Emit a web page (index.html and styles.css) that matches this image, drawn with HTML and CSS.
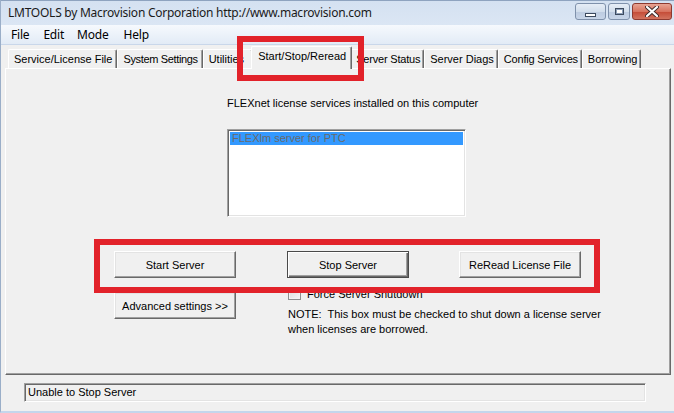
FILE: index.html
```html
<!DOCTYPE html>
<html>
<head>
<meta charset="utf-8">
<link rel="stylesheet" href="styles.css">
</head>
<body>
<div class="window">
  <div class="titlebar">
    <span class="title">LMTOOLS by Macrovision Corporation http://www.macrovision.com</span>
    <div class="controls">
      <div class="ctl ctl-min"><span class="min-glyph"></span></div>
      <div class="ctl ctl-max"><span class="max-glyph"></span></div>
      <div class="ctl ctl-close">
        <svg width="14" height="11" viewBox="0 0 14 11">
          <path d="M2 1 L12 10 M12 1 L2 10" stroke="#3c2a2a" stroke-width="4" stroke-linecap="round"/>
          <path d="M2 1 L12 10 M12 1 L2 10" stroke="#ffffff" stroke-width="2.2" stroke-linecap="round"/>
        </svg>
      </div>
    </div>
  </div>
  <div class="menubar">
    <span class="menu-item">File</span>
    <span class="menu-item">Edit</span>
    <span class="menu-item">Mode</span>
    <span class="menu-item">Help</span>
  </div>
  <div class="tabs">
    <div class="tab">Service/License File</div>
    <div class="tab tab-tight">System Settings</div>
    <div class="tab tab-wide">Utilities</div>
    <div class="tab tab-active">Start/Stop/Reread</div>
    <div class="tab tab-after tab-snug">Server Status</div>
    <div class="tab tab-after">Server Diags</div>
    <div class="tab tab-after tab-snug">Config Services</div>
    <div class="tab tab-after">Borrowing</div>
  </div>
  <div class="panel">
    <div class="services">
      <div class="label">FLEXnet license services installed on this computer</div>
      <div class="listbox">
        <div class="list-item selected">FLEXlm server for PTC</div>
      </div>
    </div>
    <div class="btn-row">
      <div class="btn">Start Server</div>
      <div class="btn btn-default">Stop Server</div>
      <div class="btn">ReRead License File</div>
    </div>
    <div class="lower">
      <div class="btn btn-adv">Advanced settings &gt;&gt;</div>
      <div class="options">
        <div class="check-row"><span class="checkbox"></span><span>Force Server Shutdown</span></div>
        <div class="note">NOTE:&nbsp; This box must be checked to shut down a license server<br>when licenses are borrowed.</div>
      </div>
    </div>
  </div>
  <div class="statusbar">
    <div class="status">Unable to Stop Server</div>
  </div>
</div>
<div class="hl hl-tab"></div>
<div class="hl hl-buttons"></div>
</body>
</html>
```
FILE: styles.css
```css
html, body {
  margin: 0;
  padding: 0;
}
body {
  width: 674px;
  height: 413px;
  overflow: hidden;
  background: #f0f0f0;
  font-family: "Liberation Sans", Arial, sans-serif;
  font-size: 11px;
  color: #000;
  position: relative;
}
.window {
  height: 411px;
  border-bottom: 2px solid #c4d6ec;
  border-left: 1px solid #9aaec8;
  box-sizing: content-box;
  display: flex;
  flex-direction: column;
}
.titlebar {
  height: 25px;
  display: flex;
  align-items: center;
  background: linear-gradient(#d4e1f1, #dbe6f4);
  border-top: 1px solid #8ea3bf;
  box-sizing: border-box;
  padding-left: 7px;
}
.title {
  font-family: "Noto Sans", "Open Sans", sans-serif;
  font-size: 12px;
  color: #1a1a1a;
  letter-spacing: -0.25px;
  flex: 1;
  margin-top: -1px;
}
.controls {
  display: flex;
  gap: 2px;
  margin-right: 2px;
  margin-top: -3px;
}
.ctl {
  height: 17px;
  box-sizing: border-box;
  border: 1px solid #7f91ab;
  border-radius: 3px;
  display: flex;
  align-items: center;
  justify-content: center;
}
.ctl-min, .ctl-max {
  background: linear-gradient(#e6edf6 0%, #d2deec 50%, #bccbe0 51%, #c7d5e8 100%);
}
.ctl-min { width: 31px; }
.ctl-max { width: 22px; }
.ctl-close {
  width: 40px;
  background: linear-gradient(#e8a493 0%, #d7735f 50%, #c44a35 51%, #d2735f 100%);
  border-color: #8d3a30;
}
.min-glyph {
  width: 9px;
  height: 2px;
  border: 1px solid #3c4a5e;
  background: #fff;
  margin-top: 6px;
}
.max-glyph {
  width: 7px;
  height: 5px;
  border: 1px solid #3c4a5e;
  background: #fff;
  box-shadow: inset 0 0 0 1px #8fa0b8;
}
.menubar {
  height: 19px;
  display: flex;
  align-items: center;
  padding-left: 10px;
  gap: 12px;
  background: linear-gradient(#f6f9fd, #e2ebf6);
  border-bottom: 1px solid #c9d7ea;
  font-family: "Noto Sans", "Open Sans", sans-serif;
  font-size: 12px;
  letter-spacing: -0.2px;
}
.menu-item:nth-child(2) { margin-left: 2px; }
.menu-item:nth-child(3) { margin-left: 1px; }
.menu-item:nth-child(4) { margin-left: 3px; }
.tabs {
  height: 23px;
  display: flex;
  align-items: flex-end;
  padding-left: 7px;
  box-sizing: border-box;
}
.tab {
  height: 19px;
  box-sizing: border-box;
  padding: 0 4px 0 5px;
  line-height: 18px;
  white-space: nowrap;
  border-top: 1px solid #ffffff;
  border-left: 1px solid #ffffff;
  border-right: 1px solid #696969;
  box-shadow: inset -1px 0 #a0a0a0;
  border-radius: 2px 2px 0 0;
}
.tab-tight {
  letter-spacing: -0.35px;
}
.tab-wide {
  padding-right: 8px;
}
.tab-after {
  padding-right: 3px;
}
.tab-snug {
  letter-spacing: -0.2px;
}
.tab-active {
  height: 23px;
  margin: 0 -2px -1px -2px;
  padding: 0 5px 0 6px;
  line-height: 19px;
  background: #f0f0f0;
  position: relative;
  z-index: 1;
}
.panel {
  height: 307px;
  margin: 0 3px 0 4px;
  box-sizing: border-box;
  border-top: 1px solid #ffffff;
  border-left: 1px solid #ffffff;
  border-right: 1px solid #696969;
  border-bottom: 1px solid #696969;
  box-shadow: inset -1px -1px #a0a0a0;
  padding-top: 27px;
}
.services {
  margin-left: 221px;
}
.label {
  line-height: 14px;
}
.listbox {
  margin-top: 19px;
  width: 239px;
  height: 88px;
  box-sizing: border-box;
  background: #fff;
  border-top: 1px solid #a0a0a0;
  border-left: 1px solid #a0a0a0;
  border-right: 1px solid #ffffff;
  border-bottom: 1px solid #ffffff;
  box-shadow: inset 1px 1px #696969, inset -1px -1px #e3e3e3;
  padding: 2px 2px 0 2px;
}
.list-item {
  height: 13px;
  line-height: 13px;
  padding-left: 2px;
}
.selected {
  background: #3399ff;
  color: #6a6a6a;
}
.btn-row {
  display: flex;
  margin-left: 108px;
  margin-top: 34px;
  gap: 51px;
}
.btn {
  width: 122px;
  height: 27px;
  box-sizing: border-box;
  display: flex;
  align-items: center;
  justify-content: center;
  border-top: 1px solid #ffffff;
  border-left: 1px solid #ffffff;
  border-right: 1px solid #696969;
  border-bottom: 1px solid #696969;
  box-shadow: inset -1px -1px #a0a0a0, inset 1px 1px #e3e3e3;
  background: #f0f0f0;
  white-space: nowrap;
}
.btn-default {
  border: 1px solid #4a4a4a;
  box-shadow: inset 1px 1px #ffffff, inset -1px -1px #696969, inset -2px -2px #a0a0a0;
}
.btn-row .btn:nth-child(3) { margin-left: -1px; }
.lower {
  display: grid;
  grid-template-columns: 122px 1fr;
  column-gap: 52px;
  margin-left: 108px;
}
.btn-adv {
  margin-top: 14px;
}
.options {
  margin-top: 9px;
}
.check-row {
  display: flex;
  align-items: center;
  gap: 6px;
  height: 13px;
}
.checkbox {
  width: 13px;
  height: 13px;
  box-sizing: border-box;
  border: 1px solid #8e8f8f;
  background: linear-gradient(135deg, #dcdcdc, #f6f6f6);
  box-shadow: inset 0 0 0 1px #f4f4f4;
}
.note {
  margin-top: 7px;
  line-height: 15px;
}
.statusbar {
  padding: 8px 0 0 23px;
}
.status {
  width: 622px;
  height: 19px;
  box-sizing: border-box;
  border-top: 1px solid #a0a0a0;
  border-left: 1px solid #a0a0a0;
  border-right: 1px solid #ffffff;
  border-bottom: 1px solid #ffffff;
  box-shadow: inset 1px 1px #696969, inset -1px -1px #e3e3e3;
  padding-left: 3px;
  line-height: 17px;
}
.hl {
  position: absolute;
  border: 6px solid #e2222a;
  box-sizing: border-box;
  z-index: 5;
}
.hl-tab {
  left: 237px;
  top: 36px;
  width: 127px;
  height: 45px;
}
.hl-buttons {
  left: 94px;
  top: 239px;
  width: 506px;
  height: 54px;
}
```
